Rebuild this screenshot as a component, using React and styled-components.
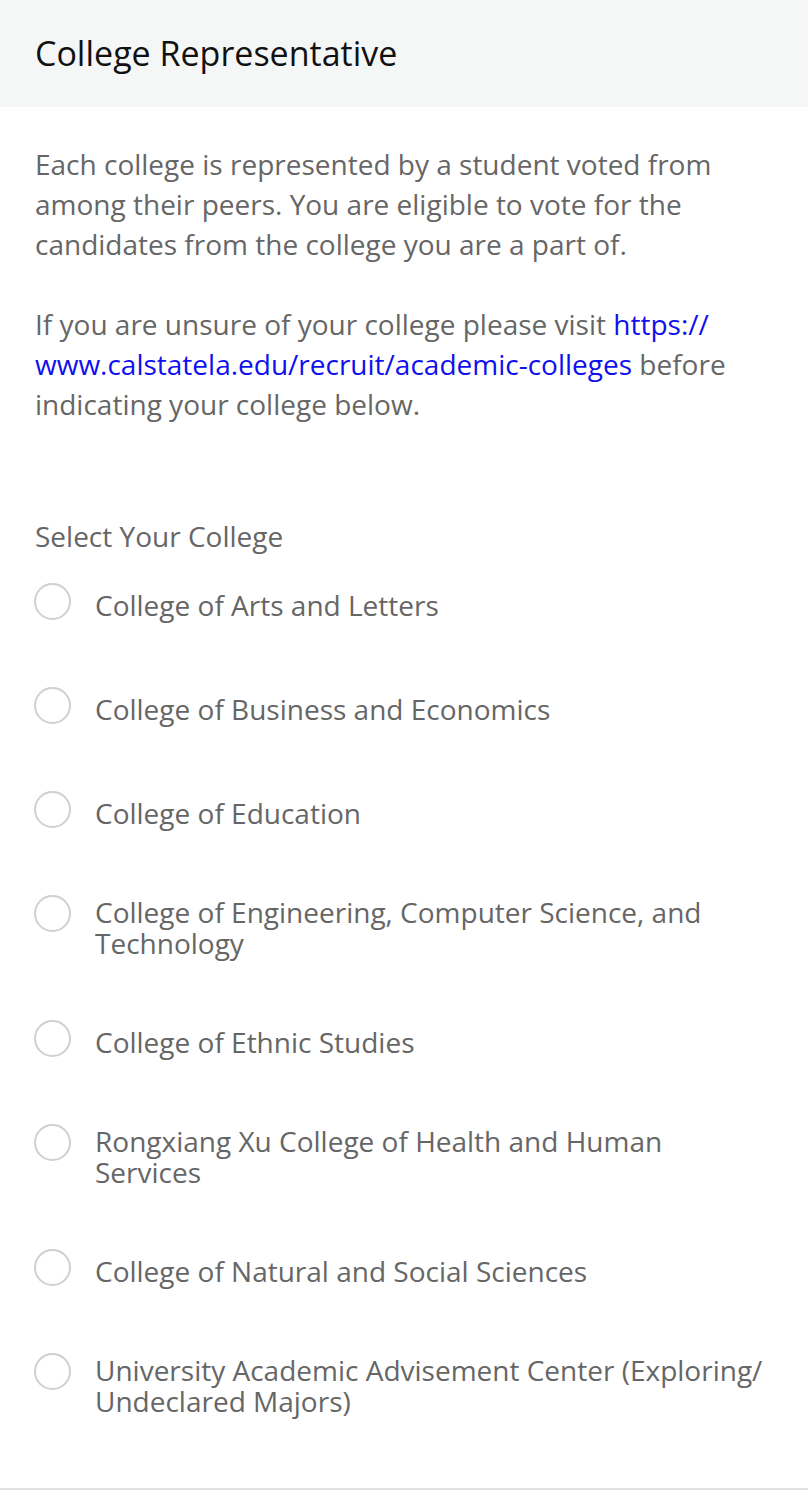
import React from "react";
import styled, { createGlobalStyle } from "styled-components";

const colleges = [
  "College of Arts and Letters",
  "College of Business and Economics",
  "College of Education",
  "College of Engineering, Computer Science, and Technology",
  "College of Ethnic Studies",
  "Rongxiang Xu College of Health and Human Services",
  "College of Natural and Social Sciences",
  "University Academic Advisement Center (Exploring/ Undeclared Majors)",
];

const App = () => {
  return (
    <>
      <GlobalStyle />
      <Card>
        <Header>
          <h1>College Representative</h1>
        </Header>
        <Body>
          <Paragraph>
            Each college is represented by a student voted from among their
            peers. You are eligible to vote for the candidates from the college
            you are a part of.
          </Paragraph>
          <Paragraph>
            If you are unsure of your college please visit{" "}
            <Link href="#">
              https://<wbr />www.calstatela.edu/recruit/academic-colleges
            </Link>{" "}
            before indicating your college below.
          </Paragraph>
          <Field>
            <Label>Select Your College</Label>
            <Options>
              {colleges.map((name) => (
                <Option key={name}>
                  <Radio type="radio" name="college" />
                  <OptionText>{name}</OptionText>
                </Option>
              ))}
            </Options>
          </Field>
        </Body>
      </Card>
    </>
  );
};

const GlobalStyle = createGlobalStyle`
  body {
    margin: 0;
    background: #fff;
    font-family: "Open Sans", "Noto Sans", sans-serif;
  }
`;

const Card = styled.div`
  width: 808px;
  border-bottom: 2px solid #e1e1e1;
`;

const Header = styled.div`
  background: #f5f6f6;
  height: 107px;
  padding: 0 35px;
  display: flex;
  align-items: center;
  h1 {
    margin: 0 0 1px;
    font-size: 34px;
    font-weight: 400;
    color: #111;
  }
`;

const Body = styled.div`
  padding: 37px 35px 71px;
`;

const Paragraph = styled.p`
  margin: 0 0 40px;
  font-size: 28px;
  line-height: 40px;
  color: #666;
`;

const Link = styled.a`
  color: #1010ee;
  text-decoration: none;
`;

/* margin collapses with the paragraph's 40px above */
const Field = styled.div`
  margin-top: 92px;
`;

const Label = styled.div`
  font-size: 28px;
  line-height: 40px;
  color: #666;
  margin-bottom: 27px;
`;

const Options = styled.div`
  display: flex;
  flex-direction: column;
  gap: 61px;
`;

const Option = styled.label`
  display: flex;
  align-items: flex-start;
  gap: 24px;
`;

const OptionText = styled.span`
  display: flex;
  align-items: center;
  min-height: 41px;
  margin-top: 2px;
  font-size: 28px;
  line-height: 31px;
  color: #666;
`;

const Radio = styled.input`
  appearance: none;
  margin: 0 0 0 -1px;
  flex: none;
  width: 37px;
  height: 37px;
  border: 2px solid #d0d0d0;
  border-radius: 50%;
  background: #fff;
`;

export default App;
